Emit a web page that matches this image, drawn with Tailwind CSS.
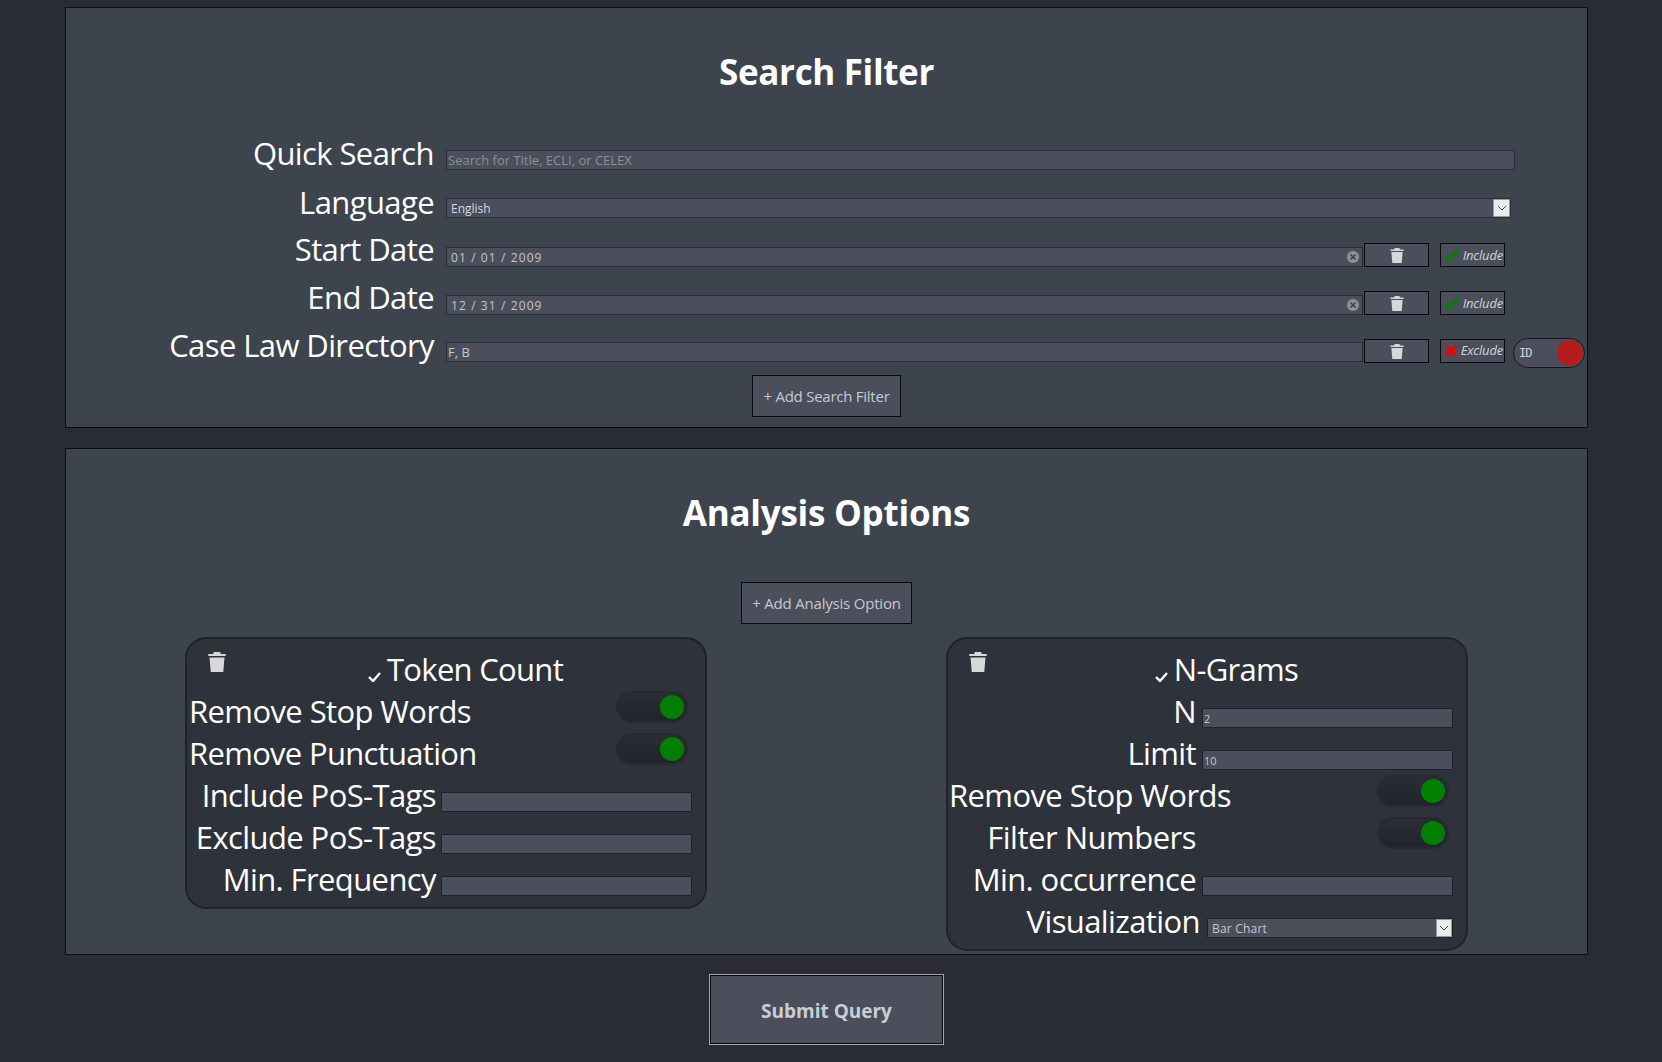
<!doctype html>
<html><head><meta charset="utf-8"><script src="https://cdn.jsdelivr.net/npm/@tailwindcss/browser@4"></script></head>
<body class="bg-[#292c34] font-['Open_Sans',sans-serif] text-white overflow-hidden">
<div class="w-[1653px] h-[1062px] pt-[7px] flex flex-col items-center">

<section class="w-[1523px] h-[421px] bg-[#3e444e] border border-[#0c0e12]">
  <h1 class="h-[127px] pt-[40px] text-center text-[35px] leading-[48px] font-bold tracking-[-0.35px]">Search Filter</h1>

  <div class="h-[48px] flex">
    <div class="w-[368px] text-right text-[31px] leading-[36px] tracking-[-0.6px]">Quick Search</div>
    <div class="ml-[12px] mt-[15px] w-[1069px] h-[20px] bg-[#4a4f5b] border border-[#2a2d35] text-[13px] leading-[18px] pl-[1px] text-[#8b9099]">Search for Title, ECLI, or CELEX</div>
  </div>

  <div class="h-[48px] flex">
    <div class="w-[368px] text-right text-[31px] leading-[38px] tracking-[-0.6px]">Language</div>
    <div class="ml-[12px] mt-[15px] w-[1065px] h-[20px] bg-[#4a4f5b] border border-[#2a2d35] text-[12px] leading-[20px] pl-[4px] text-[#d5d8dd] flex justify-between">
      <span>English</span>
      <span class="w-[17px] h-[18px] bg-[#ececec] border border-[#9a9a9a] flex items-center justify-center"><svg width="10" height="6" viewBox="0 0 10 6" fill="none" stroke="#444" stroke-width="1"><path d="M1 1l4 4 4-4"/></svg></span>
    </div>
  </div>

  <div class="h-[48px] flex">
    <div class="w-[368px] text-right text-[31px] leading-[36px] tracking-[-0.6px]">Start Date</div>
    <div class="ml-[12px] mt-[16px] w-[917px] h-[20px] bg-[#4a4f5b] border border-[#2a2d35] text-[12px] leading-[17px] pl-[4px] pr-[3px] text-[#c5c8ce] flex justify-between items-center">
      <span class="tracking-[1.1px]">01 / 01 / 2009</span>
      <span class="w-[12px] h-[12px] rounded-full bg-[#8e9096] flex items-center justify-center"><svg width="8" height="8" viewBox="0 0 8 8" stroke="#3f434c" stroke-width="1.7"><path d="M1.5 1.5l5 5M6.5 1.5l-5 5"/></svg></span>
    </div>
    <div class="ml-[1px] mt-[12px] w-[65px] h-[24px] bg-[#4a4f5b] border border-[#08090b] flex items-center justify-center"><svg width="14" height="15" viewBox="0 0 14 16" fill="#d8d8d8"><path d="M4.5 0h5l.6 1.6H14v1.6H0V1.6h3.9zM1 4.3h12L12 16H2z"/></svg></div>
    <div class="ml-[11px] mt-[12px] w-[65px] h-[24px] bg-[#4a4f5b] border border-[#08090b] flex items-center justify-between pl-[3px] pr-[1px]">
      <svg width="16" height="13" viewBox="0 0 16 13" fill="none" stroke="#008000" stroke-width="3"><path d="M1 7l4 4 10-10"/></svg>
      <span class="pt-[1px] text-[13px] italic tracking-[-0.2px] text-[#d0d3d8]">Include</span>
    </div>
  </div>

  <div class="h-[48px] flex">
    <div class="w-[368px] text-right text-[31px] leading-[36px] tracking-[-0.6px]">End Date</div>
    <div class="ml-[12px] mt-[16px] w-[917px] h-[20px] bg-[#4a4f5b] border border-[#2a2d35] text-[12px] leading-[17px] pl-[4px] pr-[3px] text-[#c5c8ce] flex justify-between items-center">
      <span class="tracking-[1.1px]">12 / 31 / 2009</span>
      <span class="w-[12px] h-[12px] rounded-full bg-[#8e9096] flex items-center justify-center"><svg width="8" height="8" viewBox="0 0 8 8" stroke="#3f434c" stroke-width="1.7"><path d="M1.5 1.5l5 5M6.5 1.5l-5 5"/></svg></span>
    </div>
    <div class="ml-[1px] mt-[12px] w-[65px] h-[24px] bg-[#4a4f5b] border border-[#08090b] flex items-center justify-center"><svg width="14" height="15" viewBox="0 0 14 16" fill="#d8d8d8"><path d="M4.5 0h5l.6 1.6H14v1.6H0V1.6h3.9zM1 4.3h12L12 16H2z"/></svg></div>
    <div class="ml-[11px] mt-[12px] w-[65px] h-[24px] bg-[#4a4f5b] border border-[#08090b] flex items-center justify-between pl-[3px] pr-[1px]">
      <svg width="16" height="13" viewBox="0 0 16 13" fill="none" stroke="#008000" stroke-width="3"><path d="M1 7l4 4 10-10"/></svg>
      <span class="pt-[1px] text-[13px] italic tracking-[-0.2px] text-[#d0d3d8]">Include</span>
    </div>
  </div>

  <div class="h-[48px] flex">
    <div class="w-[368px] text-right text-[31px] leading-[36px] tracking-[-0.6px]">Case Law Directory</div>
    <div class="ml-[12px] mt-[15px] w-[917px] h-[20px] bg-[#4a4f5b] border border-[#2a2d35] text-[13px] leading-[18px] pl-[1px] text-[#c5c8ce]">F, B</div>
    <div class="ml-[1px] mt-[12px] w-[65px] h-[24px] bg-[#4a4f5b] border border-[#08090b] flex items-center justify-center"><svg width="14" height="15" viewBox="0 0 14 16" fill="#d8d8d8"><path d="M4.5 0h5l.6 1.6H14v1.6H0V1.6h3.9zM1 4.3h12L12 16H2z"/></svg></div>
    <div class="ml-[11px] mt-[12px] w-[65px] h-[24px] bg-[#4a4f5b] border border-[#08090b] flex items-center justify-between pl-[4px] pr-[1px]">
      <svg width="12" height="12" viewBox="0 0 12 12" stroke="#f00000" stroke-width="3.2"><path d="M1 1l10 10M11 1L1 11"/></svg>
      <span class="text-[13px] italic tracking-[-0.2px] text-[#d0d3d8]">Exclude</span>
    </div>
    <div class="ml-[8px] mt-[11px] w-[72px] h-[30px] rounded-full bg-[#4a4f5b] border border-[#15171b] flex items-center justify-between pl-[5px] pr-[1px]">
      <span class="text-[12px] text-[#d0d3d8] font-['DejaVu_Sans_Mono',monospace] tracking-[-1px]">ID</span>
      <span class="w-[26px] h-[26px] rounded-full bg-[#b51c1c]"></span>
    </div>
  </div>

  <div class="h-[42px] flex justify-center">
    <div class="w-[149px] h-[42px] bg-[#4a4f5b] border border-[#08090b] flex items-center justify-center text-[15px] tracking-[-0.25px] text-[#c5cad2]">+ Add Search Filter</div>
  </div>
</section>

<section class="mt-[20px] w-[1523px] h-[507px] bg-[#3e444e] border border-[#0c0e12]">
  <h1 class="h-[133px] pt-[40px] text-center text-[35px] leading-[48px] font-bold tracking-[-0.25px]">Analysis Options</h1>
  <div class="h-[55px] flex justify-center">
    <div class="w-[171px] h-[42px] bg-[#4a4f5b] border border-[#08090b] flex items-center justify-center text-[15px] tracking-[-0.2px] text-[#c5cad2]">+ Add Analysis Option</div>
  </div>
  <div class="flex justify-between items-start pl-[119px] pr-[119px]">

    <div class="w-[522px] h-[272px] rounded-[21px] bg-[#2e323a] border-2 border-[#20232a] pt-[10px]">
      <div class="h-[42px] flex">
        <svg class="ml-[21px] mt-[3px]" width="18" height="20" viewBox="0 0 14 16" fill="#d8d8d8"><path d="M4.5 0h5l.6 1.6H14v1.6H0V1.6h3.9zM1 4.3h12L12 16H2z"/></svg>
        <div class="flex-1 flex justify-center">
          <svg class="mt-[23px] mr-[6px]" width="13" height="10" viewBox="0 0 13 10" fill="none" stroke="#fff" stroke-width="2.4"><path d="M1 5l4 4 7-8"/></svg>
          <span class="text-[31px] leading-[40px] tracking-[-0.7px]">Token Count</span>
        </div>
      </div>
      <div class="h-[42px] flex justify-between">
        <div class="pl-[2px] text-[31px] leading-[40px] tracking-[-0.6px]">Remove Stop Words</div>
        <div class="mr-[17px] w-[72px] h-[32px] rounded-full bg-gradient-to-b from-[#2a2d35] to-[#22242b] border-2 border-[#272a31] flex items-center justify-end pr-[2px]"><span class="w-[24px] h-[24px] rounded-full bg-[#008000]"></span></div>
      </div>
      <div class="h-[42px] flex justify-between">
        <div class="pl-[2px] text-[31px] leading-[40px] tracking-[-0.7px]">Remove Punctuation</div>
        <div class="mr-[17px] w-[72px] h-[32px] rounded-full bg-gradient-to-b from-[#2a2d35] to-[#22242b] border-2 border-[#272a31] flex items-center justify-end pr-[2px]"><span class="w-[24px] h-[24px] rounded-full bg-[#008000]"></span></div>
      </div>
      <div class="h-[42px] flex">
        <div class="w-[249px] text-right text-[31px] leading-[40px] tracking-[-0.6px]">Include PoS-Tags</div>
        <div class="ml-[5px] mt-[17px] w-[251px] h-[20px] bg-[#4a4f5b] border border-[#20232a]"></div>
      </div>
      <div class="h-[42px] flex">
        <div class="w-[249px] text-right text-[31px] leading-[40px] tracking-[-0.6px]">Exclude PoS-Tags</div>
        <div class="ml-[5px] mt-[17px] w-[251px] h-[20px] bg-[#4a4f5b] border border-[#20232a]"></div>
      </div>
      <div class="h-[42px] flex">
        <div class="w-[249px] text-right text-[31px] leading-[40px] tracking-[-0.6px]">Min. Frequency</div>
        <div class="ml-[5px] mt-[17px] w-[251px] h-[20px] bg-[#4a4f5b] border border-[#20232a]"></div>
      </div>
    </div>

    <div class="w-[522px] h-[314px] rounded-[21px] bg-[#2e323a] border-2 border-[#20232a] pt-[10px]">
      <div class="h-[42px] flex">
        <svg class="ml-[21px] mt-[3px]" width="18" height="20" viewBox="0 0 14 16" fill="#d8d8d8"><path d="M4.5 0h5l.6 1.6H14v1.6H0V1.6h3.9zM1 4.3h12L12 16H2z"/></svg>
        <div class="flex-1 flex justify-center">
          <svg class="mt-[23px] mr-[6px]" width="13" height="10" viewBox="0 0 13 10" fill="none" stroke="#fff" stroke-width="2.4"><path d="M1 5l4 4 7-8"/></svg>
          <span class="text-[31px] leading-[40px] tracking-[-0.7px]">N-Grams</span>
        </div>
      </div>
      <div class="h-[42px] flex">
        <div class="w-[248px] text-right text-[31px] leading-[40px] tracking-[-0.6px]">N</div>
        <div class="ml-[6px] mt-[17px] w-[251px] h-[20px] bg-[#4a4f5b] border border-[#20232a] text-[11px] leading-[20px] pl-[1px] text-[#c5c8ce]">2</div>
      </div>
      <div class="h-[42px] flex">
        <div class="w-[248px] text-right text-[31px] leading-[40px] tracking-[-0.6px]">Limit</div>
        <div class="ml-[6px] mt-[17px] w-[251px] h-[20px] bg-[#4a4f5b] border border-[#20232a] text-[11px] leading-[20px] pl-[1px] text-[#c5c8ce]">10</div>
      </div>
      <div class="h-[42px] flex justify-between">
        <div class="pl-[1px] text-[31px] leading-[40px] tracking-[-0.6px]">Remove Stop Words</div>
        <div class="mr-[17px] w-[72px] h-[32px] rounded-full bg-gradient-to-b from-[#2a2d35] to-[#22242b] border-2 border-[#272a31] flex items-center justify-end pr-[2px]"><span class="w-[24px] h-[24px] rounded-full bg-[#008000]"></span></div>
      </div>
      <div class="h-[42px] flex justify-between">
        <div class="w-[248px] text-right text-[31px] leading-[40px] tracking-[-0.5px]">Filter Numbers</div>
        <div class="mr-[17px] w-[72px] h-[32px] rounded-full bg-gradient-to-b from-[#2a2d35] to-[#22242b] border-2 border-[#272a31] flex items-center justify-end pr-[2px]"><span class="w-[24px] h-[24px] rounded-full bg-[#008000]"></span></div>
      </div>
      <div class="h-[42px] flex">
        <div class="w-[248px] text-right text-[31px] leading-[40px] tracking-[-0.6px]">Min. occurrence</div>
        <div class="ml-[6px] mt-[17px] w-[251px] h-[20px] bg-[#4a4f5b] border border-[#20232a]"></div>
      </div>
      <div class="h-[42px] flex">
        <div class="w-[252px] text-right text-[31px] leading-[40px] tracking-[-0.6px]">Visualization</div>
        <div class="ml-[7px] mt-[17px] w-[246px] h-[20px] bg-[#4a4f5b] border border-[#20232a] text-[12px] tracking-[0.2px] leading-[20px] pl-[4px] text-[#c5c8ce] flex justify-between">
          <span>Bar Chart</span>
          <span class="w-[16px] h-[18px] bg-[#ececec] border border-[#9a9a9a] flex items-center justify-center"><svg width="10" height="6" viewBox="0 0 10 6" fill="none" stroke="#444" stroke-width="1"><path d="M1 1l4 4 4-4"/></svg></span>
        </div>
      </div>
    </div>
  </div>
</section>

<button class="mt-[20px] w-[233px] h-[69px] pt-[4px] bg-[#4a4f5b] border border-[#08090b] outline outline-1 outline-[#a8a8a8] text-[19px] font-bold text-[#c9ced6]">Submit Query</button>
</div>
</body></html>
